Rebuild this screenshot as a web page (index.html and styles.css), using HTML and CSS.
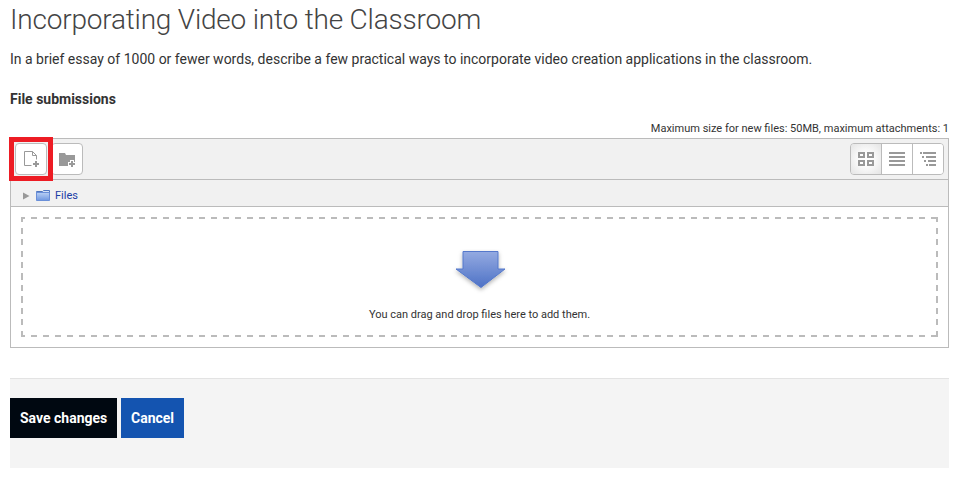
FILE: index.html
```html
<!DOCTYPE html>
<html lang="en">
<head>
<meta charset="utf-8">
<title>File submissions</title>
<link rel="stylesheet" href="styles.css">
</head>
<body>
<main>
  <h1><span>Incorporating Video into the Classroom</span></h1>
  <p class="intro"><span>In a brief essay of 1000 or fewer words, describe a few practical ways to incorporate video creation applications in the classroom.</span></p>
  <h2><span>File submissions</span></h2>
  <p class="limits"><span>Maximum size for new files: 50MB, maximum attachments: 1</span></p>
  <section class="manager">
    <div class="toolbar">
      <button class="tool highlighted" aria-label="Add file">
        <svg width="32" height="32" viewBox="0 0 32 32"><path d="M16.500 22.500h-7v-14h8l4 4v4M17.500 8.500v4h4" fill="none" stroke="#999"/><path d="M20 18h2v2h2v2h-2v2h-2v-2h-2v-2h2z" fill="#999"/></svg>
      </button>
      <button class="tool" aria-label="Create folder">
        <svg width="32" height="32" viewBox="0 0 32 32"><path d="M8 10h6l1 2h9v11H8z" fill="#999"/><path d="M19 17h4v2h2v6h-8v-6h2z" fill="#fff"/><path d="M20 18h2v2h2v2h-2v2h-2v-2h-2v-2h2z" fill="#999"/></svg>
      </button>
      <div class="views">
        <button class="view active" aria-label="Icons"><svg width="30" height="30" viewBox="0 0 30 30"><path d="M8 9h5v4H8zM17 9h5v4h-5zM8 17h5v4H8zM17 17h5v4h-5z" fill="none" stroke="#999" stroke-width="2"/></svg></button>
        <button class="view" aria-label="List"><svg width="30" height="30" viewBox="0 0 30 30"><path d="M7 8h16v2H7zM7 12h16v2H7zM7 16h16v2H7zM7 20h16v2H7z" fill="#999"/></svg></button>
        <button class="view" aria-label="Tree"><svg width="30" height="30" viewBox="0 0 30 30"><path d="M7 8h2v2H7zM10 8h13v2H10zM9 12h2v2H9zM13 12h10v2H13zM11 16h2v2h-2zM15 16h8v2h-8zM13 20h2v2h-2zM16 20h7v2h-7z" fill="#999"/></svg></button>
      </div>
    </div>
    <div class="path">
      <svg class="caret" width="7" height="8" viewBox="0 0 7 8"><path d="M0 .5 6.500 4 0 7.500z" fill="#999"/></svg>
      <svg class="folder" width="15" height="13" viewBox="0 0 15 13">
        <defs><linearGradient id="folder" x1="0" y1="0" x2="0" y2="1"><stop offset="0" stop-color="#b9d0f5"/><stop offset="1" stop-color="#6f97e0"/></linearGradient></defs>
        <path d="M.5 10.500v-8h6l1-1h6v9z" fill="#d3e0f8" stroke="#5077bf"/><path d="M.5 3.500h13v8H.5z" fill="url(#folder)" stroke="#6a8fd8"/>
      </svg>
      <a>Files</a>
    </div>
    <div class="content">
      <div class="dropzone">
        <svg width="60" height="48" viewBox="0 0 60 48">
          <defs>
            <linearGradient id="arrow" x1="0" y1="0" x2="0" y2="1"><stop offset="0" stop-color="#94aae1"/><stop offset="1" stop-color="#4e72c6"/></linearGradient>
            <filter id="shadow" x="-20%" y="-20%" width="140%" height="150%"><feDropShadow dx="0" dy="2" stdDeviation="2" flood-color="#000" flood-opacity=".3"/></filter>
          </defs>
          <path d="M13 2.500h35v17.500h7L31 38.500 6 20h7z" fill="url(#arrow)" stroke="#5478cb" filter="url(#shadow)"/>
        </svg>
        <span class="hint">You can drag and drop files here to add them.</span>
      </div>
    </div>
  </section>
  <div class="actions">
    <button class="action save">Save changes</button>
    <button class="action cancel">Cancel</button>
  </div>
</main>
</body>
</html>
```
FILE: styles.css
```css
* { box-sizing: border-box; }
body { margin: 0; background: #fff; color: #333; font-family: Roboto, sans-serif; font-size: 14px; line-height: 20px; }
main { width: 939px; margin-left: 10px; }
h1, h2, p { margin: 0; white-space: nowrap; }
h1 { height: 49px; font-size: 28px; font-weight: 300; line-height: 40px; letter-spacing: -.2px; color: #444; }
.intro { height: 40px; }
h2 { height: 30px; font-size: 14px; line-height: 20px; font-weight: 700; }
.limits { height: 19px; font-size: 11px; line-height: 20px; text-align: right; }
button { margin: 0; padding: 0; font-family: inherit; }
svg { display: block; flex: none; }
.manager { height: 210px; border: 1px solid #bbb; }
.toolbar { display: flex; height: 41px; padding: 4px; background: #f1f1f1; border-bottom: 1px solid #bbb; }
.tool { position: relative; width: 32px; height: 32px; margin-right: 4px; border: 1px solid #bbb; border-radius: 4px; background: #fff; display: flex; align-items: center; justify-content: center; }
.highlighted { z-index: 1; }
.highlighted::after { content: ""; position: absolute; inset: -7px; border: 5px solid #ed1c24; }
.views { display: flex; width: 94px; height: 32px; margin-left: auto; border: 1px solid #bbb; border-radius: 4px; overflow: hidden; }
.view { flex: 1; border: 0; background: #fff; display: flex; align-items: center; justify-content: center; }
.view + .view { border-left: 1px solid #bbb; }
.view.active { background: radial-gradient(ellipse, #fff 25%, #e4e4e4 100%); }
.path { display: flex; align-items: center; height: 27px; padding: 5px 0 0 12px; background: #f1f1f1; border-bottom: 1px solid #bbb; font-size: 11px; line-height: 20px; }
.folder { margin: 0 4px 1px 6px; }
.path a { color: #1a3da6; }
.content { padding: 10px; height: 140px; }
.dropzone {
  --across: repeating-linear-gradient(90deg, #bbb 0 4px, transparent 4px 10px, #bbb 10px 12px);
  --down: repeating-linear-gradient(180deg, #bbb 0 5px, transparent 5px 10.5px, #bbb 10.5px 11.5px);
  height: 120px;
  display: flex;
  flex-direction: column;
  align-items: center;
  padding-top: 32px;
  background:
    var(--across) 0 0 / 100% 2px no-repeat,
    var(--across) 0 100% / 100% 2px no-repeat,
    var(--down) 0 0 / 2px 100% no-repeat,
    var(--down) 100% 0 / 2px 100% no-repeat;
}
.hint { margin-top: 8px; font-size: 11px; line-height: 20px; }
.actions { display: flex; gap: 4px; align-items: flex-start; height: 90px; margin-top: 30px; padding-top: 19px; border-top: 1px solid #e3e3e3; background: #f4f4f4; }
.action { height: 40px; padding: 0 10px; border: 0; color: #fff; font-size: 14px; font-weight: 700; line-height: 20px; white-space: nowrap; }
.save { width: 107px; background: #000811; }
.cancel { width: 63px; background: #1454b0; }
```
